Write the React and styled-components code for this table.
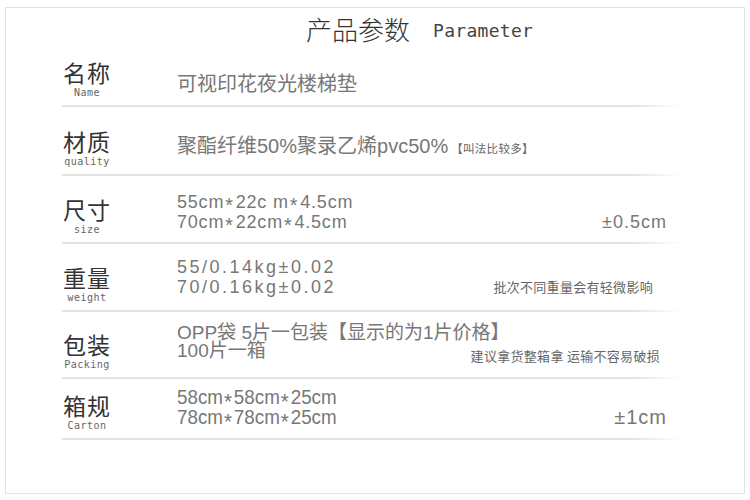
import React from "react";
import styled, { createGlobalStyle } from "styled-components";

const GlobalStyle = createGlobalStyle`
  html, body {
    margin: 0;
    padding: 0;
    background: #fff;
  }
  body {
    font-family: "Liberation Sans", "Noto Sans CJK SC", sans-serif;
  }
`;

const rows = [
  {
    zh: "名称",
    en: "Name",
    h: 56,
    lines: ["可视印花夜光楼梯垫"],
    size: 20,
    lift: 11,
  },
  {
    zh: "材质",
    en: "quality",
    h: 67,
    lines: ["聚酯纤维50%聚录乙烯pvc50%"],
    extra: "【叫法比较多】",
    size: 20,
    lift: 16,
  },
  {
    zh: "尺寸",
    en: "size",
    h: 66,
    lines: ["55cm*22c m*4.5cm", "70cm*22cm*4.5cm"],
    note: "±0.5cm",
    noteSize: 18,
    size: 18,
    spacing: 0.8,
    lift: 10,
  },
  {
    zh: "重量",
    en: "weight",
    h: 66,
    lines: ["55/0.14kg±0.02", "70/0.16kg±0.02"],
    note: "批次不同重量会有轻微影响",
    cjkNote: true,
    noteSize: 13,
    noteRight: 14,
    size: 18,
    spacing: 2.5,
    lift: 13,
  },
  {
    zh: "包装",
    en: "Packing",
    h: 65,
    lines: ["OPP袋 5片一包装【显示的为1片价格】", "100片一箱"],
    note: "建议拿货整箱拿 运输不容易破损",
    cjkNote: true,
    noteSize: 13,
    noteDrop: 6,
    noteRight: 7,
    size: 19,
    lh: 18,
    lift: 17,
  },
  {
    zh: "箱规",
    en: "Carton",
    h: 59,
    lines: ["58cm*58cm*25cm", "78cm*78cm*25cm"],
    note: "±1cm",
    noteSize: 20,
    size: 20,
    narrow: true,
    lift: 11,
  },
];

// asterisks in the sizes sit at mid height, so lower them a little
const renderLine = (text) =>
  text.split("*").map((part, i) => (
    <React.Fragment key={i}>
      {i > 0 && <Star>*</Star>}
      {part}
    </React.Fragment>
  ));

export default function App() {
  return (
    <>
      <GlobalStyle />
      <Frame>
        <Title>
          <TitleZh>产品参数</TitleZh>
          <TitleEn>Parameter</TitleEn>
        </Title>
        {rows.map((r) => (
          <Row key={r.zh} $h={r.h}>
            <Label>
              <LabelZh>{r.zh}</LabelZh>
              <LabelEn>{r.en}</LabelEn>
            </Label>
            <ValueArea $lift={r.lift}>
              <Lines $size={r.size} $lh={r.lh} $spacing={r.spacing} $narrow={r.narrow}>
                {r.lines.map((l, i) => (
                  <div key={i}>
                    {renderLine(l)}
                    {r.extra && i === 0 && <Extra>{r.extra}</Extra>}
                  </div>
                ))}
              </Lines>
              {r.note && (
                <Note
                  $size={r.noteSize}
                  $drop={r.noteDrop}
                  $right={r.noteRight}
                  $cjk={r.cjkNote}
                >
                  {r.note}
                </Note>
              )}
            </ValueArea>
          </Row>
        ))}
      </Frame>
    </>
  );
}

const Frame = styled.div`
  margin: 7px 0 0 5px;
  width: 740px;
  height: 487px;
  box-sizing: border-box;
  border: 1px solid #e2e2e2;
`;

const Title = styled.div`
  height: 41px;
  display: flex;
  align-items: center;
  padding-left: 300px;
  gap: 23px;
  color: #333;
`;

const TitleZh = styled.span`
  font-family: "Noto Sans CJK SC", sans-serif;
  font-size: 26px;
  font-weight: 300;
  color: #333;
`;

const TitleEn = styled.span`
  font-family: "DejaVu Sans Mono", monospace;
  font-size: 18px;
  color: #444;
  margin-top: 3px;
  letter-spacing: 0.3px;
`;

const Row = styled.div`
  position: relative;
  margin-left: 56px;
  width: 620px;
  height: ${(p) => p.$h}px;
  box-sizing: border-box;
  padding: 0 15px 6px 0;
  display: grid;
  grid-template-columns: 50px 1fr;
  column-gap: 65px;
  align-items: end;
  margin-bottom: 2px;

  &::after {
    content: "";
    position: absolute;
    left: 0;
    right: 0;
    bottom: -2px;
    height: 2px;
    background: linear-gradient(to right, #e3e3e3 0%, #e3e3e3 92%, rgba(227, 227, 227, 0) 100%);
  }
`;

const Label = styled.div`
  display: flex;
  flex-direction: column;
  align-items: center;
`;

const LabelZh = styled.div`
  font-family: "Noto Sans CJK SC", sans-serif;
  font-size: 23px;
  line-height: 24px;
  color: #333;
  letter-spacing: 1px;
`;

const LabelEn = styled.div`
  font-family: "DejaVu Sans Mono", monospace;
  font-size: 10px;
  line-height: 12px;
  margin-top: 3px;
  color: #666;
  letter-spacing: 0.5px;
`;

const ValueArea = styled.div`
  display: grid;
  align-items: end;
  padding-bottom: ${(p) => p.$lift - 6}px;

  & > * {
    grid-area: 1 / 1;
  }
`;

const Lines = styled.div`
  font-family: "Liberation Sans", "Noto Sans CJK SC", sans-serif;
  font-size: ${(p) => p.$size}px;
  line-height: ${(p) => p.$lh || 20}px;
  letter-spacing: ${(p) => p.$spacing || 0}px;
  color: #777;
  white-space: nowrap;
  transform: ${(p) => (p.$narrow ? "scaleX(0.94)" : "none")};
  transform-origin: left center;
`;

const Star = styled.span`
  position: relative;
  top: 0.22em;
  font-size: 1.1em;
  line-height: 0;
  margin: 0 2px 0 1px;
`;

const Extra = styled.span`
  font-family: "Noto Sans CJK SC", sans-serif;
  font-size: 11.5px;
  letter-spacing: 0.3px;
  color: #666;
  margin-left: 3px;
`;

const Note = styled.div`
  justify-self: end;
  font-family: ${(p) =>
    p.$cjk ? '"Noto Sans CJK SC", sans-serif' : '"Liberation Sans", "Noto Sans CJK SC", sans-serif'};
  font-size: ${(p) => p.$size}px;
  line-height: 20px;
  color: ${(p) => (p.$cjk ? "#666" : "#777")};
  white-space: nowrap;
  margin-bottom: ${(p) => -(p.$drop || 0)}px;
  margin-right: ${(p) => p.$right || 0}px;
  letter-spacing: ${(p) => (p.$cjk ? 0.3 : 1)}px;
`;
